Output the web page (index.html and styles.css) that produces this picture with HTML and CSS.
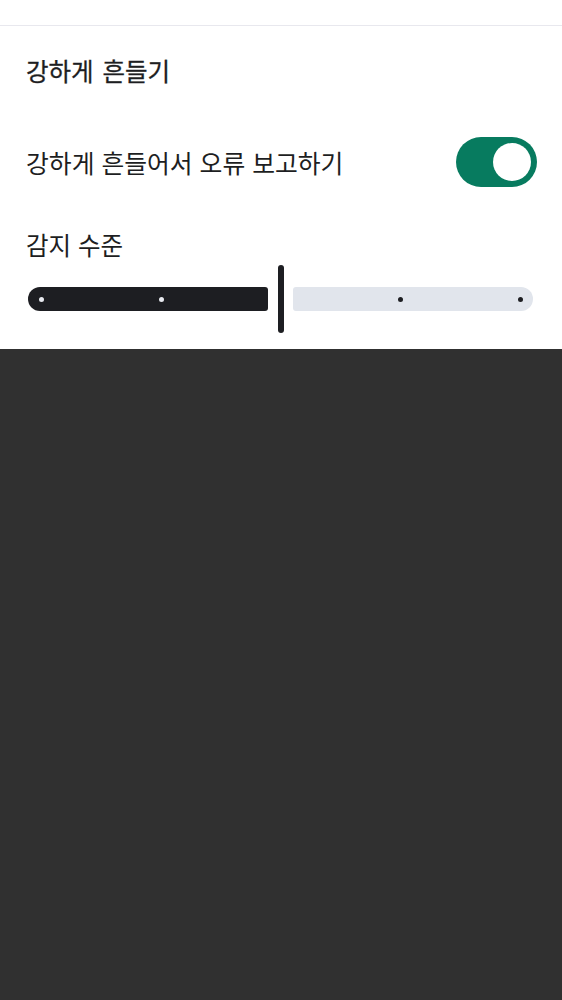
FILE: index.html
```html
<!DOCTYPE html>
<html lang="ko">
<head>
<meta charset="utf-8">
<link rel="stylesheet" href="styles.css">
</head>
<body>
<div class="topbar"></div>
<section class="panel">
  <h1 class="title">강하게 흔들기</h1>
  <div class="row">
    <span class="row-text">강하게 흔들어서 오류 보고하기</span>
    <div class="toggle"><div class="knob"></div></div>
  </div>
  <div class="label">감지 수준</div>
  <div class="slider">
    <div class="track track-filled"><span class="dot"></span><span class="dot"></span></div>
    <div class="thumb"></div>
    <div class="track track-empty"><span class="dot"></span><span class="dot"></span></div>
  </div>
</section>
<div class="backdrop"></div>
</body>
</html>
```
FILE: styles.css
```css
html, body {
  margin: 0;
  padding: 0;
  height: 100%;
}
body {
  display: flex;
  flex-direction: column;
  background: #303030;
  font-family: "Noto Sans CJK KR", "Noto Sans", sans-serif;
  color: #1d1e22;
}
.topbar {
  height: 25px;
  background: #ffffff;
  border-bottom: 1px solid #e8e8ee;
}
.panel {
  background: #ffffff;
  padding: 30px 25px 16px 26px;
  display: flex;
  flex-direction: column;
}
.title {
  margin: 0;
  font-size: 24.5px;
  font-weight: 400;
  word-spacing: 2px;
  -webkit-text-stroke: 0.3px #1d1e22;
  line-height: 30px;
  height: 30px;
}
.row {
  margin-top: 51px;
  height: 50px;
  display: flex;
  align-items: center;
  justify-content: space-between;
}
.row-text {
  font-size: 24.8px;
  line-height: 30px;
}
.toggle {
  width: 81px;
  height: 50px;
  border-radius: 25px;
  background: #077b5f;
  display: flex;
  align-items: center;
  justify-content: flex-end;
  padding-right: 6px;
  box-sizing: border-box;
}
.knob {
  width: 38px;
  height: 38px;
  border-radius: 50%;
  background: #ffffff;
}
.label {
  margin-top: 43px;
  font-size: 24.5px;
  line-height: 30px;
  height: 30px;
}
.slider {
  margin: 5px 4px 0 2px;
  height: 68px;
  display: flex;
  align-items: center;
}
.track {
  flex: 1;
  height: 24px;
  display: flex;
  align-items: center;
  gap: 115px;
  box-sizing: border-box;
}
.track-filled {
  background: #1d1e22;
  border-radius: 12px 3px 3px 12px;
  padding-left: 10.5px;
}
.track-filled .dot {
  background: #e8eaf0;
}
.track-empty {
  background: #e1e5ec;
  border-radius: 3px 12px 12px 3px;
  justify-content: flex-end;
  padding-right: 10px;
}
.track-empty .dot {
  background: #1d1e22;
}
.dot {
  width: 5px;
  height: 5px;
  border-radius: 50%;
}
.thumb {
  width: 6px;
  height: 68px;
  border-radius: 3px;
  background: #1d1e22;
  margin: 0 9px 0 10px;
}
.backdrop {
  flex: 1;
  background: #303030;
}
```
